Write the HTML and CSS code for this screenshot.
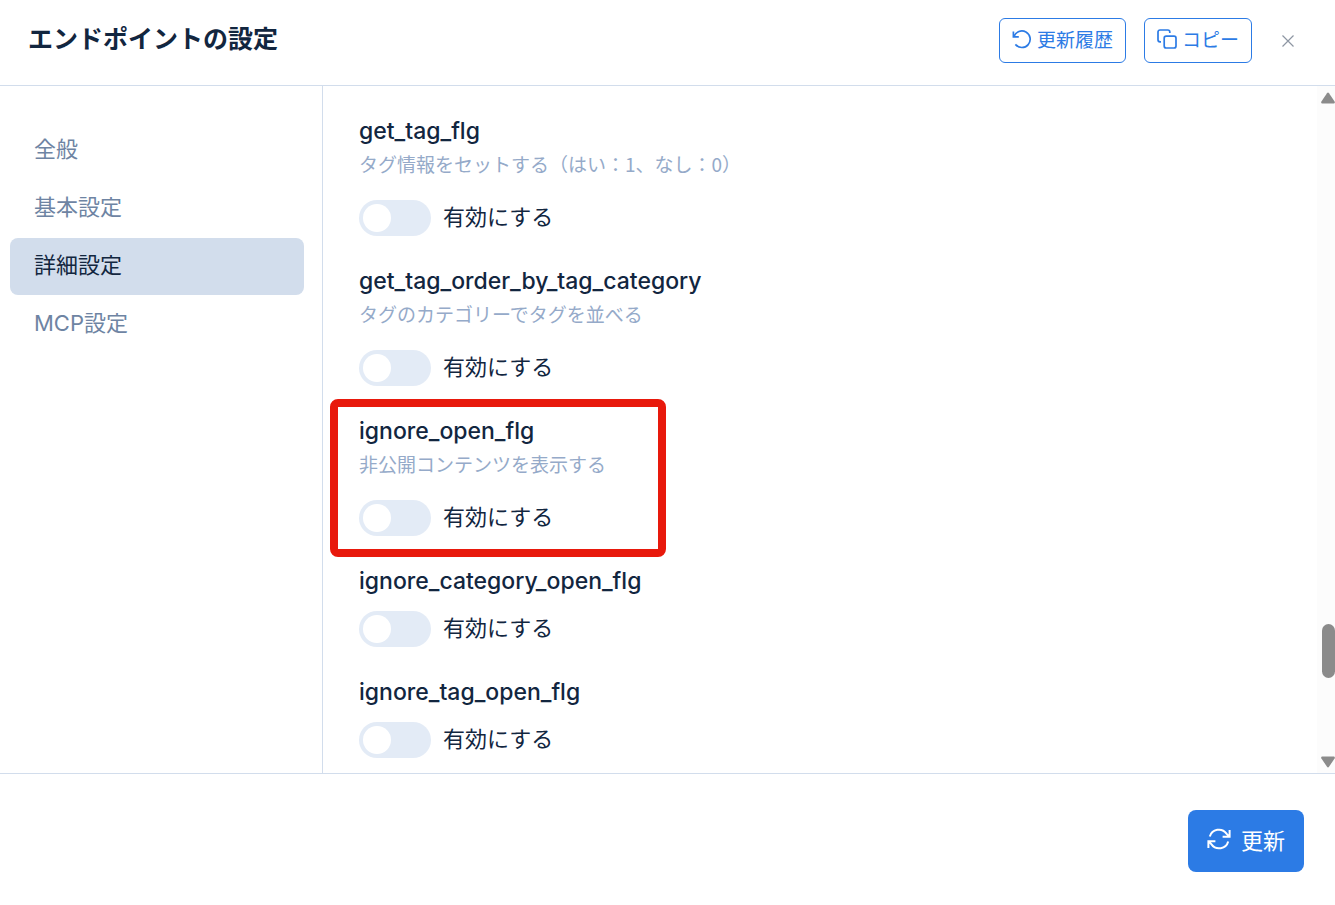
FILE: index.html
```
<!DOCTYPE html>
<html lang="ja">
<head>
    <meta charset="UTF-8">
    <meta name="viewport" content="width=device-width, initial-scale=1.0">
    <title>エンドポイントの設定</title>
    <link rel="stylesheet" href="styles.css">
</head>
<body>
    <div class="modal">
        <header class="modal-header">
            <h1>エンドポイントの設定</h1>
            <div class="actions">
                <button type="button" class="btn-outline">
                    <svg class="icon" viewBox="0 0 20 20" aria-hidden="true">
                        <path d="M1.4 2.4v5.4h5.4M2 7.6A8.3 8.3 0 1 1 3.4 15.4"/>
                    </svg>
                    更新履歴
                </button>
                <button type="button" class="btn-outline">
                    <svg class="icon" viewBox="0 0 20 20" aria-hidden="true">
                        <rect x="7.2" y="7.2" width="11.8" height="11.8" rx="2"/>
                        <path d="M4 12.8H3a2 2 0 0 1-2-2V3a2 2 0 0 1 2-2h7.8a2 2 0 0 1 2 2v1"/>
                    </svg>
                    コピー
                </button>
                <button type="button" class="btn-close" aria-label="閉じる">
                    <svg viewBox="0 0 12 12" aria-hidden="true">
                        <path d="M.5.5l11 11M11.5.5l-11 11"/>
                    </svg>
                </button>
            </div>
        </header>

        <div class="modal-body">
            <nav class="sidebar">
                <a href="#general">全般</a>
                <a href="#basic">基本設定</a>
                <a href="#advanced" class="active">詳細設定</a>
                <a href="#mcp">MCP設定</a>
            </nav>

            <main class="content">
                <section class="field">
                    <h2>get_tag_flg</h2>
                    <p>タグ情報をセットする（はい：1、なし：0）</p>
                    <label class="switch"><input type="checkbox" name="get_tag_flg"><span>有効にする</span></label>
                </section>
                <section class="field">
                    <h2>get_tag_order_by_tag_category</h2>
                    <p>タグのカテゴリーでタグを並べる</p>
                    <label class="switch"><input type="checkbox" name="get_tag_order_by_tag_category"><span>有効にする</span></label>
                </section>
                <section class="field highlight">
                    <h2>ignore_open_flg</h2>
                    <p>非公開コンテンツを表示する</p>
                    <label class="switch"><input type="checkbox" name="ignore_open_flg"><span>有効にする</span></label>
                </section>
                <section class="field">
                    <h2>ignore_category_open_flg</h2>
                    <label class="switch"><input type="checkbox" name="ignore_category_open_flg"><span>有効にする</span></label>
                </section>
                <section class="field">
                    <h2>ignore_tag_open_flg</h2>
                    <label class="switch"><input type="checkbox" name="ignore_tag_open_flg"><span>有効にする</span></label>
                </section>
            </main>

            <div class="scrollbar" aria-hidden="true">
                <svg viewBox="0 0 14 12"><path d="M6 1.2Q7 0 8 1.2L13.6 9.6Q14.4 11.4 12.6 11.4H1.4Q-.4 11.4.4 9.6Z"/></svg>
                <div class="track"><div class="thumb"></div></div>
                <svg viewBox="0 0 14 12"><path d="M6 10.8Q7 12 8 10.8L13.6 2.4Q14.4.6 12.6.6H1.4Q-.4.6.4 2.4Z"/></svg>
            </div>
        </div>

        <footer class="modal-footer">
            <button type="button" class="btn-primary">
                <svg viewBox="0 0 24 22" aria-hidden="true">
                    <path d="M2.8 8.6A9.4 9.4 0 0 1 19.5 5.6L22 8.4M22.6 2v6.8h-7M21.2 13.4A9.4 9.4 0 0 1 4.5 16.4L2 13.6M1.4 20v-6.8h7"/>
                </svg>
                更新
            </button>
        </footer>
    </div>
</body>
</html>
```
FILE: styles.css
```
*, *::before, *::after {
    box-sizing: border-box;
}
body {
    margin: 0;
    font-family: Inter, "Noto Sans CJK JP", sans-serif;
    font-size: 22px;
    color: #12263f;
    background: #fff;
}
h1, h2, p {
    margin: 0;
}
button {
    font-family: "Noto Sans CJK JP", sans-serif;
    cursor: pointer;
}
svg {
    fill: none;
    stroke: currentColor;
    stroke-width: 2;
}
.modal {
    display: flex;
    flex-direction: column;
    height: 100vh;
}

/* header */
.modal-header {
    display: flex;
    justify-content: space-between;
    align-items: flex-start;
    padding: 18px 34px 22px 28px;
    border-bottom: 1px solid #d2ddec;
}
.modal-header h1 {
    font-size: 25px;
    line-height: 42px;
    font-weight: 700;
}
.actions {
    display: flex;
    align-items: center;
    gap: 18px;
}
.btn-outline {
    display: flex;
    align-items: center;
    gap: 5px;
    height: 45px;
    padding: 0 12px 4px;
    border: 1px solid #2c7be5;
    border-radius: 6px;
    background: #fff;
    color: #2c7be5;
    font-size: 19px;
}
.icon {
    width: 20px;
    height: 20px;
    stroke-width: 1.7;
}
.btn-close {
    display: flex;
    padding: 7px;
    margin-left: 5px;
    border: 0;
    background: none;
    color: #8d96a3;
}
.btn-close svg {
    width: 12px;
    height: 12px;
    stroke-width: 1.2;
}

/* body */
.modal-body {
    display: flex;
    flex: 1;
    min-height: 0;
}
.sidebar {
    display: flex;
    flex-direction: column;
    gap: 1px;
    flex: 0 0 323px;
    padding: 36px 18px 0 10px;
    border-right: 1px solid #d2ddec;
}
.sidebar a {
    padding: 0 24px 2px;
    line-height: 55px;
    border-radius: 8px;
    color: #6e84a3;
    text-decoration: none;
}
.sidebar a.active {
    background: #d2ddec;
    color: #12263f;
}
.content {
    flex: 1;
    overflow: hidden;
    padding: 28px 36px 0;
}
.field {
    position: relative;
    margin-bottom: 28px;
}
.field h2 {
    font-size: 23px;
    line-height: 34px;
    font-weight: 500;
    margin-bottom: 13px;
}
.field p {
    margin: -13px 0 20px;
    font-family: "Noto Sans CJK JP", sans-serif;
    font-size: 19px;
    line-height: 32px;
    color: #95aac9;
}
.highlight::after {
    content: "";
    position: absolute;
    top: -15px;
    left: -29px;
    width: 336px;
    height: 158px;
    border: 8px solid #e8190c;
    border-radius: 8px;
    pointer-events: none;
}

/* toggle */
.switch {
    display: flex;
    align-items: center;
    gap: 12px;
    height: 36px;
}
.switch span {
    font-family: "Noto Sans CJK JP", sans-serif;
    line-height: 30px;
    padding-bottom: 6px;
}
.switch input {
    appearance: none;
    width: 72px;
    height: 36px;
    margin: 0;
    padding: 4px;
    border-radius: 18px;
    background: #e3ebf6;
}
.switch input::before {
    content: "";
    display: block;
    width: 28px;
    height: 28px;
    border-radius: 50%;
    background: #fff;
}
.switch input:checked {
    background: #2c7be5;
}
.switch input:checked::before {
    margin-left: auto;
}

/* scrollbar */
.scrollbar {
    display: flex;
    flex-direction: column;
    flex: 0 0 18px;
    padding: 6px 0 5px 4px;
    background: #fcfcfc;
}
.scrollbar svg {
    width: 14px;
    height: 12px;
    fill: #8b8b8b;
    stroke: none;
}
.track {
    flex: 1;
    display: flex;
    flex-direction: column;
}
.track::before {
    content: "";
    flex: 520;
}
.track::after {
    content: "";
    flex: 78;
}
.thumb {
    width: 13px;
    height: 54px;
    margin-left: 1px;
    border-radius: 7px;
    background: #8b8b8b;
}

/* footer */
.modal-footer {
    display: flex;
    justify-content: flex-end;
    padding: 36px 31px 33px;
    border-top: 1px solid #d2ddec;
}
.btn-primary {
    display: flex;
    align-items: center;
    gap: 10px;
    height: 62px;
    padding: 0 19px 4px;
    border: 0;
    border-radius: 8px;
    background: #2c7be5;
    color: #fff;
    font-size: 22px;
}
.btn-primary svg {
    width: 24px;
    height: 22px;
}
```
